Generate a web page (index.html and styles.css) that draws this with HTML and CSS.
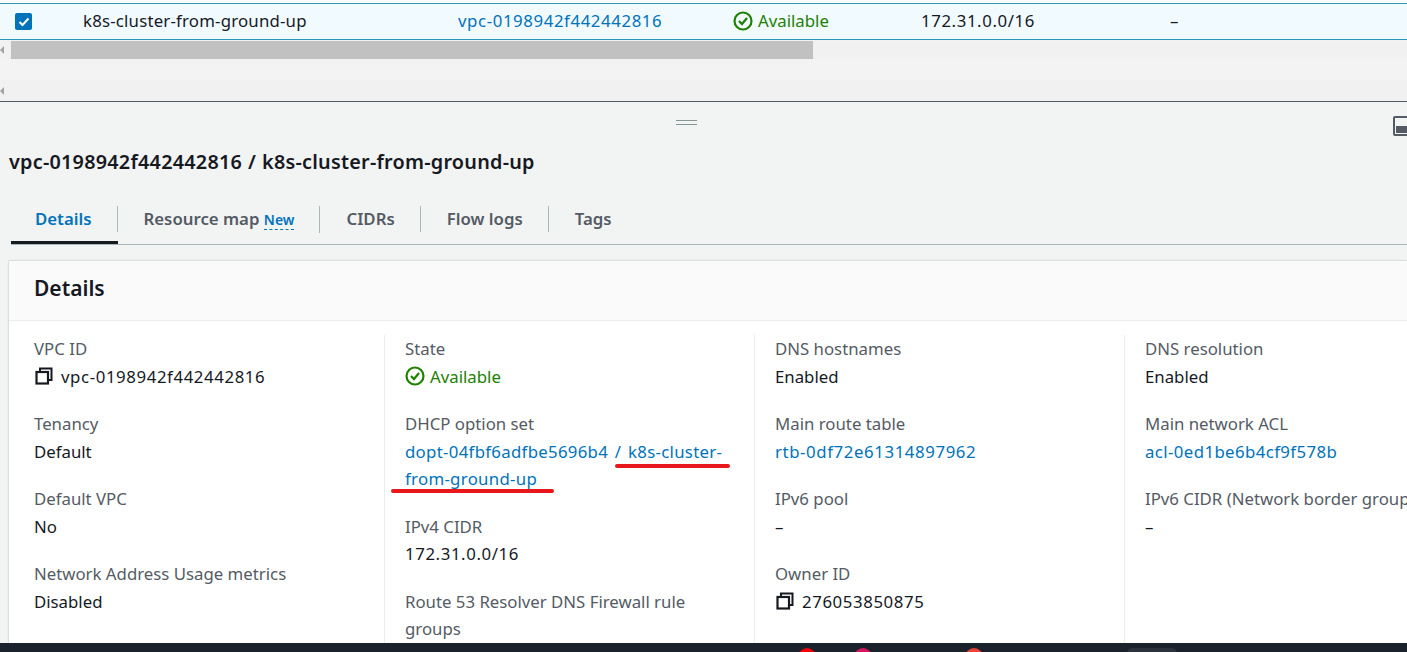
FILE: index.html
```html
<!DOCTYPE html>
<html lang="en">
<head>
  <meta charset="UTF-8">
  <title>VPC details</title>
  <link rel="stylesheet" href="styles.css">
</head>
<body>
  <div class="top-gap"></div>
  <div class="table-row">
    <span class="cell cell-check">
      <span class="checkbox">
        <svg width="12" height="10" viewBox="0 0 12 10"><path d="M1.500 5l3 3 6-6.500" fill="none" stroke="#fff" stroke-width="2"/></svg>
      </span>
    </span>
    <span class="cell cell-name">k8s-cluster-from-ground-up</span>
    <span class="cell cell-vpc"><a class="num" href="#">vpc-0198942f442442816</a></span>
    <span class="cell cell-state">
      <svg class="status-icon" width="20" height="20" viewBox="0 0 20 20"><circle cx="10" cy="10" r="8.500" fill="none" stroke="#1d8102" stroke-width="2.200"/><path d="M6 10l3 3 5-6" fill="none" stroke="#1d8102" stroke-width="2.200"/></svg>
      <span class="available">Available</span>
    </span>
    <span class="cell cell-cidr num">172.31.0.0/16</span>
    <span class="cell">–</span>
  </div>

  <div class="scrollbar">
    <span class="scroll-arrow"></span>
    <span class="scroll-thumb"></span>
  </div>
  <div class="spacer"></div>
  <div class="scrollbar scrollbar-empty">
    <span class="scroll-arrow"></span>
  </div>

  <div class="split-panel">
    <div class="panel-tools">
      <span class="drag-handle"></span>
      <svg class="panel-icon" width="20" height="20" viewBox="0 0 20 20"><rect x="1" y="1" width="18" height="18" rx="1" fill="none" stroke="#545b64" stroke-width="2"/><rect x="3" y="10" width="14" height="7" fill="#545b64"/></svg>
    </div>

    <h2 class="panel-title">vpc-0198942f442442816 / k8s-cluster-from-ground-up</h2>

    <div class="tabs">
      <a class="tab tab-active" href="#"><span>Details</span></a>
      <a class="tab" href="#"><span>Resource map <em class="new-tag">New</em></span></a>
      <a class="tab" href="#"><span>CIDRs</span></a>
      <a class="tab" href="#"><span>Flow logs</span></a>
      <a class="tab" href="#"><span>Tags</span></a>
    </div>

    <section class="card">
      <h3 class="card-title">Details</h3>
      <div class="columns">
        <div class="col">
          <div class="field">
            <div class="label">VPC ID</div>
            <div class="value value-icon">
              <svg width="18" height="18" viewBox="0 0 18 18"><path d="M5 5V1.500h11.500V13H13" fill="none" stroke="#16191f" stroke-width="2"/><rect x="1.500" y="5" width="11.500" height="11.500" fill="none" stroke="#16191f" stroke-width="2.200"/></svg>
              <span class="num">vpc-0198942f442442816</span>
            </div>
          </div>
          <div class="field">
            <div class="label">Tenancy</div>
            <div class="value">Default</div>
          </div>
          <div class="field">
            <div class="label">Default VPC</div>
            <div class="value">No</div>
          </div>
          <div class="field">
            <div class="label">Network Address Usage metrics</div>
            <div class="value">Disabled</div>
          </div>
        </div>

        <div class="col">
          <div class="field">
            <div class="label">State</div>
            <div class="value value-state">
              <svg width="20" height="20" viewBox="0 0 20 20"><circle cx="10" cy="10" r="8.500" fill="none" stroke="#1d8102" stroke-width="2.200"/><path d="M6 10l3 3 5-6" fill="none" stroke="#1d8102" stroke-width="2.200"/></svg>
              <span class="available">Available</span>
            </div>
          </div>
          <div class="field">
            <div class="label">DHCP option set</div>
            <div class="value"><a class="dhcp-link" href="#">dopt-04fbf6adfbe5696b4 / k8s-cluster-from-ground-up</a></div>
            <svg class="scribble" width="324" height="84" viewBox="0 0 324 84">
              <path d="M212 56H323M-12 81H147" fill="none" stroke="#e8171c" stroke-width="4" stroke-linecap="round"/>
            </svg>
          </div>
          <div class="field">
            <div class="label">IPv4 CIDR</div>
            <div class="value num">172.31.0.0/16</div>
          </div>
          <div class="field">
            <div class="label">Route 53 Resolver DNS Firewall rule groups</div>
          </div>
        </div>

        <div class="col">
          <div class="field">
            <div class="label">DNS hostnames</div>
            <div class="value">Enabled</div>
          </div>
          <div class="field">
            <div class="label">Main route table</div>
            <div class="value"><a class="num" href="#">rtb-0df72e61314897962</a></div>
          </div>
          <div class="field">
            <div class="label">IPv6 pool</div>
            <div class="value">–</div>
          </div>
          <div class="field">
            <div class="label">Owner ID</div>
            <div class="value value-icon">
              <svg width="18" height="18" viewBox="0 0 18 18"><path d="M5 5V1.500h11.500V13H13" fill="none" stroke="#16191f" stroke-width="2"/><rect x="1.500" y="5" width="11.500" height="11.500" fill="none" stroke="#16191f" stroke-width="2.200"/></svg>
              <span class="num">276053850875</span>
            </div>
          </div>
        </div>

        <div class="col">
          <div class="field">
            <div class="label">DNS resolution</div>
            <div class="value">Enabled</div>
          </div>
          <div class="field">
            <div class="label">Main network ACL</div>
            <div class="value"><a class="acl-link" href="#">acl-0ed1be6b4cf9f578b</a></div>
          </div>
          <div class="field">
            <div class="label nowrap">IPv6 CIDR (Network border group)</div>
            <div class="value">–</div>
          </div>
        </div>
      </div>
    </section>
  </div>

  <div class="taskbar">
    <span class="tray-dot tray-red"></span>
    <span class="tray-dot tray-pink"></span>
    <span class="tray-dot tray-orange"></span>
    <span class="tray-pill"></span>
  </div>
</body>
</html>
```

FILE: styles.css
```css
html, body {
  margin: 0;
  height: 652px;
  overflow: hidden;
}
body {
  font-family: "Noto Sans", sans-serif;
  font-size: 16.8px;
  color: #16191f;
  background: #f2f3f3;
  display: flex;
  flex-direction: column;
}
a {
  color: #0073bb;
  text-decoration: none;
}
.num { letter-spacing: 0.6px; }
.acl-link { letter-spacing: 0.4px; }
.dhcp-link { letter-spacing: 0.3px; word-spacing: 2px; }
.top-gap { height: 3px; background: #fff; flex: none; }
.table-row {
  height: 35px;
  display: flex;
  align-items: center;
  background: #f1faff;
  border-top: 1px solid #2b95bb;
  border-bottom: 1px solid #2b95bb;
  flex: none;
}
.cell { padding-bottom: 2px; }
.cell-check { width: 83px; display: flex; padding-bottom: 0; }
.checkbox {
  width: 17px;
  height: 17px;
  margin-left: 15px;
  background: #0073bb;
  border-radius: 2px;
  display: flex;
  align-items: center;
  justify-content: center;
}
.cell-name { width: 375px; letter-spacing: 0.2px; }
.cell-vpc { width: 275px; }
.cell-state { width: 188px; display: flex; align-items: center; }
.cell-cidr { width: 249px; }
.status-icon { margin-right: 5px; }
.available { color: #1d8102; }
.scrollbar {
  height: 18px;
  margin-top: 1px;
  display: flex;
  align-items: stretch;
  background: #f1f1f1;
  flex: none;
}
.scrollbar-empty { margin-top: 0; height: 21px; }
.scroll-arrow {
  width: 0;
  height: 0;
  align-self: center;
  border: 4px solid transparent;
  border-left: 0;
  border-right: 4px solid #a3a3a3;
  margin-right: 7px;
}
.scroll-thumb { width: 802px; background: #c1c1c1; }
.spacer { height: 21px; background: #f3f3f3; flex: none; }
.split-panel {
  border-top: 1px solid #545b64;
  flex: 1;
  min-height: 0;
  overflow: hidden;
  display: flex;
  flex-direction: column;
}
.panel-tools {
  height: 0;
  position: relative;
}
.drag-handle {
  position: absolute;
  left: 676px;
  top: 18px;
  width: 21px;
  height: 3px;
  border-top: 1px solid #879596;
  border-bottom: 1px solid #879596;
}
.panel-icon {
  position: absolute;
  left: 1393px;
  top: 14px;
}
.panel-title {
  margin: 47px 0 0 9px;
  font-size: 19.8px;
  font-weight: 600;
  line-height: 26px;
  letter-spacing: 0.25px;
  word-spacing: 0.5px;
}
.tabs {
  display: flex;
  margin: 25px 0 0 11px;
  border-bottom: 1px solid #aab7b8;
  height: 45px;
  box-sizing: border-box;
  flex: none;
}
.tab {
  font-size: 16.8px;
  font-weight: 600;
  color: #545b64;
  padding: 6px 0 0;
  height: 44px;
  box-sizing: border-box;
}
.tab span {
  display: block;
  padding: 0 25px 0 26px;
  line-height: 26px;
  border-right: 1px solid #aab7b8;
}
.tab:last-child span { border-right: 0; }
.tab-active { color: #0073bb; border-bottom: 3px solid #16191f; }
.tab-active span { padding-left: 24px; }
.new-tag {
  font-style: normal;
  font-size: 14px;
  color: #0073bb;
  border-bottom: 1px dashed #0073bb;
}
.card {
  margin: 16px 0 0 9px;
  background: #fff;
  box-shadow: 0 0 2px rgba(0, 28, 36, 0.3);
  flex: 1;
}
.card-title {
  margin: 0;
  height: 60px;
  padding-left: 25px;
  line-height: 55px;
  font-size: 21px;
  font-weight: 600;
  background: #fafafa;
  border-bottom: 1px solid #eaeded;
  box-sizing: border-box;
}
.columns {
  display: grid;
  grid-template-columns: 376px 370px 370px 370px;
  padding-top: 14px;
}
.col {
  padding-left: 20px;
  padding-right: 20px;
  border-right: 1px solid #eaeded;
  height: 400px;
  box-sizing: border-box;
}
.col:first-child { padding-left: 25px; }
.col:last-child { border-right: 0; padding-right: 0; }
.field {
  margin-bottom: 20px;
  line-height: 27.5px;
  position: relative;
}
.label { color: #545b64; }
.nowrap { white-space: nowrap; }
.value-icon { display: flex; align-items: center; gap: 8px; }
.value-icon svg { margin-left: 1px; }
.value-state { display: flex; align-items: center; gap: 5px; }
.scribble {
  position: absolute;
  left: 0;
  top: 0;
  overflow: visible;
}
.taskbar {
  height: 9px;
  background: #1b222c;
  flex: none;
  display: flex;
  overflow: hidden;
  padding-left: 798px;
}
.tray-dot {
  width: 18px;
  height: 18px;
  border-radius: 50%;
  margin-top: 5px;
}
.tray-red { background: #f40009; }
.tray-pink { background: #d6175f; margin-left: 38px; }
.tray-orange { background: #ea4335; margin-left: 93px; }
.tray-pill {
  width: 50px;
  height: 20px;
  margin: 5px 0 0 144px;
  background: #2b323c;
  border-radius: 5px;
}
```
